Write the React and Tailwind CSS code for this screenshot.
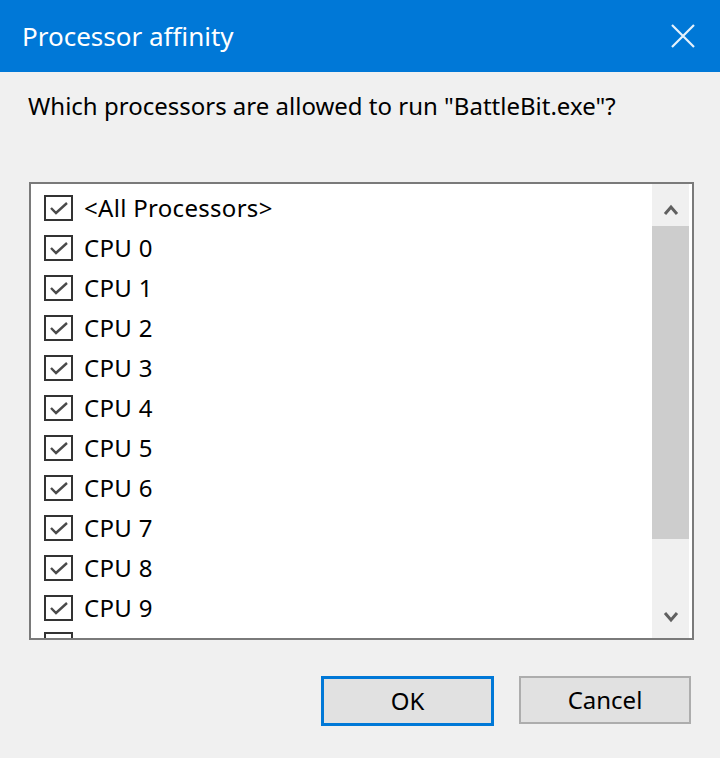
const items = ['<All Processors>', 'CPU 0', 'CPU 1', 'CPU 2', 'CPU 3', 'CPU 4', 'CPU 5', 'CPU 6', 'CPU 7', 'CPU 8', 'CPU 9'];

function CheckBox() {
  return (
    <div className="w-[29px] h-[26px] border-2 border-[#333] bg-white flex items-center justify-center shrink-0">
      <svg width="20" height="14" viewBox="0 0 20 14">
        <path d="M2 7 L7 12 L18 2" fill="none" stroke="#4a4a4a" strokeWidth="2.4" />
      </svg>
    </div>
  );
}

export default function App() {
  return (
    <div
      className="w-[720px] h-[758px] bg-[#f0f0f0] flex flex-col overflow-hidden"
      style={{ fontFamily: '"Noto Sans", "Open Sans", sans-serif' }}
    >
      {/* title bar */}
      <div className="h-[72px] bg-[#0078d7] flex items-center justify-between pl-[22px] pr-[24px] shrink-0">
        <span className="text-white text-[26px] leading-none">Processor affinity</span>
        <svg width="26" height="26" viewBox="0 0 26 26">
          <path d="M2 2 L24 24 M24 2 L2 24" stroke="#e6f2fc" strokeWidth="2.2" />
        </svg>
      </div>

      <div className="px-[28px] pt-[18px] text-[24px] text-black leading-[32px]">
        Which processors are allowed to run "BattleBit.exe"?
      </div>

      {/* list box */}
      <div className="ml-[29px] mt-[60px] w-[665px] h-[458px] border-2 border-[#7a7a7a] bg-white flex overflow-hidden shrink-0">
        <div className="flex-1 pl-[13px] pt-[4px] flex flex-col overflow-hidden">
          {items.map((it) => (
            <div key={it} className="h-[40px] flex items-center gap-[11px] shrink-0">
              <CheckBox />
              <span className="text-[24px] tracking-[0.3px] text-black leading-none">{it}</span>
            </div>
          ))}
          <div className="h-[40px] flex items-start shrink-0 pt-[4px]">
            <CheckBox />
          </div>
        </div>
        <div className="w-[37px] mr-[3px] bg-[#f0f0f0] flex flex-col items-center">
          <div className="h-[42px] w-full flex items-end justify-center pb-[10px]">
            <svg width="16" height="12" viewBox="0 0 16 12">
              <path d="M2 10 L8 3 L14 10" fill="none" stroke="#606060" strokeWidth="3" />
            </svg>
          </div>
          <div className="w-full h-[313px] bg-[#cdcdcd]" />
          <div className="flex-1" />
          <div className="h-[42px] w-full flex items-center justify-center">
            <svg width="16" height="12" viewBox="0 0 16 12">
              <path d="M2 2 L8 9 L14 2" fill="none" stroke="#606060" strokeWidth="3" />
            </svg>
          </div>
        </div>
      </div>

      {/* buttons */}
      <div className="flex justify-end gap-[25px] pr-[29px] mt-[36px]">
        <button className="w-[173px] h-[50px] border-[3px] border-[#0078d7] bg-[#e1e1e1] text-[24px] text-black">
          OK
        </button>
        <button className="w-[172px] h-[48px] border-2 border-[#adadad] bg-[#e1e1e1] text-[24px] text-black">
          Cancel
        </button>
      </div>
    </div>
  );
}
